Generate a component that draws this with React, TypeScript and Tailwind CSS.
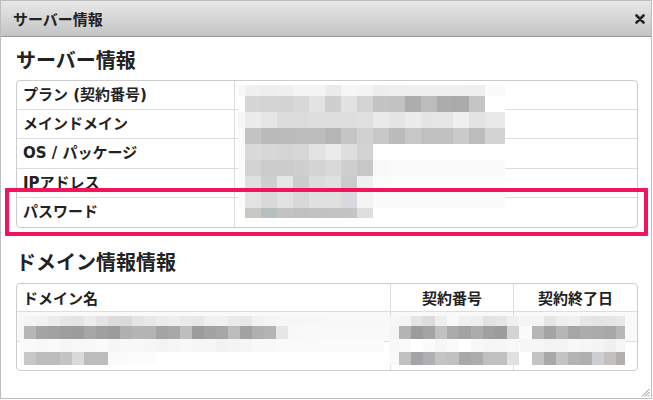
import React from "react";

type MosaicProps = {
  left: number;
  top: number;
  colW: number[];
  rowH: number[];
  colors: string[][];
};

function Mosaic({ left, top, colW, rowH, colors }: MosaicProps) {
  const width = colW.reduce((a, b) => a + b, 0);
  const height = rowH.reduce((a, b) => a + b, 0);
  const rects: React.ReactNode[] = [];
  let y = 0;
  rowH.forEach((h, ri) => {
    let x = 0;
    colW.forEach((w, ci) => {
      const c = colors[ri]?.[ci];
      if (c) rects.push(<rect key={`${ri}-${ci}`} x={x} y={y} width={w} height={h} fill={c} />);
      x += w;
    });
    y += h;
  });
  return (
    <svg
      className="absolute"
      style={{ left, top }}
      width={width}
      height={height}
      viewBox={`0 0 ${width} ${height}`}
      shapeRendering="crispEdges"
    >
      {rects}
    </svg>
  );
}

const m1Cols = [7, 16, 16, 16, 16, 16, 16, 16, 16, 16, 16, 16, 16, 16, 16, 16, 20];
const m1Rows = [11, 16, 16, 16, 16, 16, 16, 16, 10];
const W = "#ffffff";
const m1Colors = [
  ["#f8f8f8", "#f0f0f0", "#eeeeee", "#f0f0f0", "#f4f4f4", "#f4f4f4", "#ececec", "#f6f6f6", "#f4f4f4", "#eceeed", "#efefef", "#f0f0f0", "#f0f0f0", "#f0f0f0", "#f0f0f0", "#eef0ef", "#fafafa"],
  [W, "#d6d6d6", "#d4d4d4", "#d3d3d1", "#d8d8d8", "#e3e3e3", "#cfcfd1", "#e2e2e2", "#d4d4d4", "#c3c5c4", "#c2c2c2", "#adadad", "#bcbcbc", "#acacac", "#aaaaab", "#c5c5c5", W],
  ["#f6f6f6", "#ececec", "#e6e6e4", "#dcdcdc", "#dcdcdc", "#dedede", "#dedede", "#dedede", "#e0e0e0", "#eaeaea", "#e5e4e6", "#ececec", "#e5e5e5", "#e6e6e8", "#f0f0f0", "#e3e3e3", "#e8e8e8"],
  ["#fafafa", "#c4c4c4", "#bababa", "#bbbbbb", "#bcbcbc", "#bdbdbd", "#b5b5b5", "#c4c5c4", "#d1d1d1", "#c8c8c8", "#bbbbbb", "#c8c8c8", "#c0c0c0", "#c1c1c1", "#cacaca", "#bcbcbc", "#d3d3d5"],
  ["#fbfbfb", "#dadada", "#d7d7d7", "#d5d5d5", "#d7d7d7", "#e3e3e3", "#ebebeb", "#dededc", "#d3d3d3", W, W, W, W, W, W, W, W],
  ["#fbfbfb", "#d2d2d2", "#cbcccb", "#cbcccb", "#cfcfcf", "#d4d4d4", "#d8d9d9", "#cfcfcd", "#c7c7c7", "#f9f9f9", "#fbfbfb", "#fbfbfb", "#fbfbfb", "#fbfbfb", "#fbfbfb", "#fbfbfb", "#fbfbfb"],
  ["#fcfcfc", "#e0e0e0", "#cfcfcf", "#e6e6e6", "#cccccc", "#dcdcdc", "#e1e1e1", "#cacccb", "#eef0f2", "#fcfcfa", "#fdfdfd", "#fdfdfd", "#fdfdfd", "#fdfdfd", "#fdfdfd", "#fdfdfd", "#fdfdfd"],
  ["#fcfcfc", "#e3e3e3", "#d9d9d9", "#e2e2e2", "#d7d9d8", "#e1e1e1", "#e0e0e0", "#d8d9dc", "#f3f3f3", "#fbfbfb", "#fbfbfb", "#fbfbfb", "#fbfbfb", "#fbfbfb", "#fbfbfb", "#fbfbfb", "#fbfbfb"],
  [W, "#c8c9c5", "#b8bfc1", "#c3c3c3", "#c0c0c0", "#c2c2c2", "#c3c3c3", "#c4c4c4", "#dedede", W, W, W, W, W, W, W, W],
];

const m2Rows = [10, 13, 13, 13];
const nameCols = [4, ...Array(30).fill(12)];
const nameColors = [
  ["#f8f8f8", "#f4f4f4", "#f2f2f2", "#ececec", "#e6e6e6", "#e4e4e4", "#ececec", "#e4e4e4", "#dcdcdc", "#dadadc", "#e4e4e4", "#e8e8e8", "#ececec", "#eeeeee", "#eaeaea", "#e8e8e8", "#f0f0f0", "#f0f0f0", "#eaeaea", "#e8e8e8", "#f2f2f2", "#f4f4f4", "#f6f6f6", "#f6f6f6", "#f7f7f7", "#f7f7f7", "#f8f8f8", "#f8f8f8", "#f8f8f8", "#f8f8f8", "#f8f8f8"],
  ["#f6f6f6", "#b9b5b3", "#a4a4a6", "#a2a2a2", "#9e9e9e", "#9c9c9c", "#a6a6a6", "#a0a0a2", "#9c9c9e", "#b0b0b0", "#b4b4b6", "#b6b4b2", "#a4a4a4", "#a8a8a8", "#bebebe", "#9c9c9c", "#a2a2a2", "#a6a6a6", "#bcbcbc", "#a2a2a2", "#b0b0b0", "#b4b4b4", "#e6e6e8", "#f8f8f8"],
  ["#fbfbfb", "#fafafa", "#f8f8f8", "#fafafa", "#f6f6f6", "#f8f8f8", "#f8f8f8", "#fafafa", "#f6f6f6", "#f8f8f8", "#f8f8f8", "#f6f6f6", "#f4f4f4", "#f6f6f6", "#f8f8f8", "#f6f6f6", "#f6f6f6", "#f2f2f2", "#f4f4f4", "#f6f6f6", "#f8f8f8", "#f8f8f8", "#fafafa", "#fafafa", "#fafafa", "#fafafa", "#fbfbfb", "#fbfbfb", "#fbfbfb", "#fbfbfb", "#fbfbfb"],
  ["#fbfbfb", "#c8c8c8", "#bcbcbc", "#bcbcbc", "#c4c4c4", "#dadada", "#bcbcbc", "#bcbcbc", "#fafafa", "#fbfbfb", "#fcfcfc", "#fcfcfc"],
];

const numCols = [10, 12, 12, 12, 12, 12, 12, 12, 12, 12, 12];
const numColors = [
  ["#f6f6f6", "#f4f4f4", "#e4e4e4", "#dcdcdc", "#eeeeee", "#f8f8f8", "#f0f0f0", "#eeeeee", "#e2e2e2", "#e6e6e6", "#f0f0f0"],
  ["#f4f4f4", "#b4b4b4", "#9c9c9c", "#a4a4a8", "#c0c0c0", "#aaaaaa", "#a2a2a2", "#acacac", "#a0a0a0", "#9c9c9c", "#d4d4d4"],
  ["#f8f8f8", "#fafafa", "#ffffff", "#fbfbf9", "#f6f6f6", "#fafafa", "#ffffff", "#f8f8f8", "#f6f6f6", "#f6f6f6", "#f8f8f8"],
  ["#fafafa", "#c0c0c0", "#a4a4a4", "#b0b0b4", "#c4c4c4", "#c0c0c0", "#a8a8a8", "#acacac", "#c0c0c0", "#c0c0c0", "#e0e0e2"],
];

const dateCols = [12, 12, 12, 12, 12, 12, 12, 12, 9];
const dateColors = [
  ["#f4f4f4", "#f4f4f4", "#e6e6e6", "#eeeeee", "#f0f0f0", "#e6e6e6", "#e4e4e4", "#e6e6e6", "#e8e8e8"],
  ["#fafafa", "#b6b6b4", "#a4a4a4", "#b6b6b6", "#a6a6a6", "#acacac", "#aaaaaa", "#a8a8a8", "#b4b8ba"],
  ["#f6f6f6", "#f6f6f6", "#f4f4f4", "#f4f4f4", "#f8f8f8", "#f6f6f6", "#f4f4f4", "#f0f0f0", "#f6f6f6"],
  ["#ffffff", "#c4c4c4", "#a8a8a8", "#c4c4c4", "#b4b4b4", "#b0b0b0", "#ccced2", "#c2bfbc", "#b0b0b0"],
];

const labels: { text: string; h: string }[] = [
  { text: "プラン (契約番号)", h: "h-[28px]" },
  { text: "メインドメイン", h: "h-[29px] border-t" },
  { text: "OS / パッケージ", h: "h-[30px] border-t" },
  { text: "IPアドレス", h: "h-[29px] border-t" },
  { text: "パスワード", h: "h-[30px] border-t" },
];

const labelFont = { fontFamily: '"DejaVu Sans", "Noto Sans CJK JP", sans-serif' };

export default function App() {
  return (
    <div
      className="relative w-[653px] h-[400px] bg-white overflow-hidden text-[#222]"
      style={{ fontFamily: '"Noto Sans CJK JP", "Noto Sans", sans-serif' }}
    >
      <div className="w-[652px] h-[399px] border border-[#bdbdbd] flex flex-col bg-white">
        {/* Title bar */}
        <div className="h-[36px] shrink-0 flex items-center justify-between pl-[12px] pr-[4px] border-b border-[#9a9a9a] bg-linear-to-b from-[#e8e8e8] to-[#c4c4c4]">
          <span className="text-[15px] font-bold leading-none text-[#222]">サーバー情報</span>
          <svg width="10" height="10" viewBox="0 0 10 10" className="mr-[2px]">
            <path d="M1.5 1.5 L8.5 8.5 M8.5 1.5 L1.5 8.5" stroke="#222" strokeWidth="2.6" strokeLinecap="round" />
          </svg>
        </div>

        {/* Body */}
        <div className="pl-[15px] pr-[14px]">
          <h2 className="pt-[9px] mb-[6px] h-[37px] text-[20px] font-bold leading-[28px] flex items-center">サーバー情報</h2>
          <div className="w-[622px] border border-[#cccccc] rounded-[4px] overflow-hidden">
            {labels.map((l) => (
              <div key={l.text} className={`flex border-[#dddddd] ${l.h}`}>
                <div
                  className="w-[218px] border-r border-[#dddddd] pl-[6px] flex items-center text-[15px] font-bold leading-none"
                  style={labelFont}
                >
                  {l.text}
                </div>
                <div className="flex-1" />
              </div>
            ))}
          </div>

          <h2 className="mt-[20px] mb-[7px] h-[28px] text-[20px] font-bold leading-[28px] flex items-center">ドメイン情報情報</h2>
          <div className="w-[622px] border border-[#cccccc] rounded-[4px] overflow-hidden text-[15px]">
            <div className="flex h-[27px]">
              <div className="w-[374px] border-r border-[#dddddd] pl-[6px] flex items-center font-bold leading-none">ドメイン名</div>
              <div className="w-[123px] border-r border-[#dddddd] flex items-center justify-center font-bold leading-none">契約番号</div>
              <div className="flex-1 flex items-center justify-center font-bold leading-none">契約終了日</div>
            </div>
            <div className="flex h-[30px] border-t border-[#dddddd] bg-[#f9f9f9]">
              <div className="w-[374px] border-r border-[#dddddd]" />
              <div className="w-[123px] border-r border-[#dddddd]" />
              <div className="flex-1" />
            </div>
            <div className="flex h-[29px] border-t border-[#dddddd]">
              <div className="w-[374px] border-r border-[#dddddd]" />
              <div className="w-[123px] border-r border-[#dddddd]" />
              <div className="flex-1" />
            </div>
          </div>
        </div>
      </div>

      {/* Pixelated (masked) values */}
      <Mosaic left={238} top={85} colW={m1Cols} rowH={m1Rows} colors={m1Colors} />
      <Mosaic left={20} top={316} colW={nameCols} rowH={m2Rows} colors={nameColors} />
      <Mosaic left={389} top={316} colW={numCols} rowH={m2Rows} colors={numColors} />
      <Mosaic left={520} top={316} colW={dateCols} rowH={m2Rows} colors={dateColors} />

      {/* Highlight box */}
      <div className="absolute left-[5px] top-[188px] w-[643px] h-[48px] border-[4px] border-[#f2155c] rounded-[1px]" />

      {/* Resize grip */}
      <svg className="absolute right-[3px] bottom-[3px]" width="10" height="10" viewBox="0 0 10 10">
        <path d="M9.5 2 L2 9.5 M9.5 5 L5 9.5 M9.5 8 L8 9.5" stroke="#888" strokeWidth="1" />
      </svg>
    </div>
  );
}
